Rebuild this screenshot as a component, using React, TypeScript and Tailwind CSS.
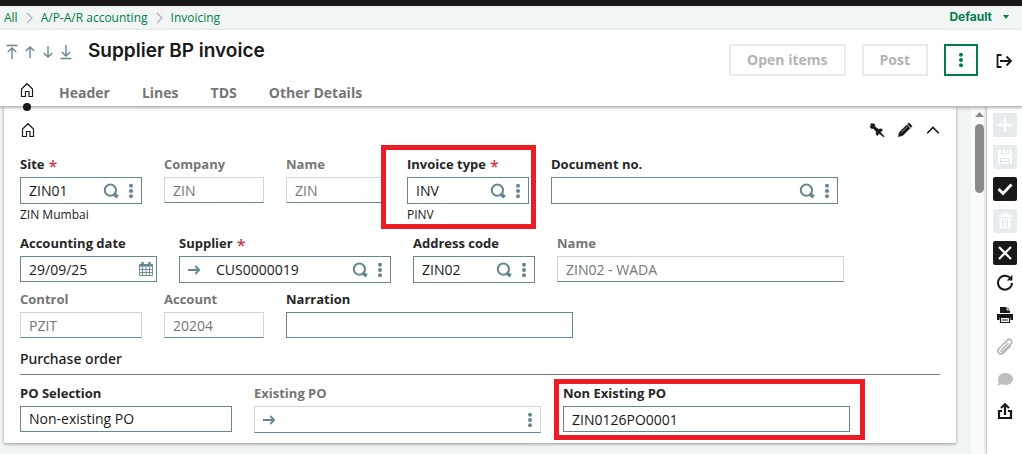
import { useId, type ReactNode } from 'react'
import clsx from 'clsx'

type IconProps = { children: ReactNode; size?: 16 | 24; className?: string }

const Icon = ({ children, size = 16, className }: IconProps) => (
  <svg
    width={size}
    height={size}
    viewBox={`0 0 ${size} ${size}`}
    fill="none"
    stroke="currentColor"
    aria-hidden="true"
    className={clsx('shrink-0', className)}
  >
    {children}
  </svg>
)

const HomeIcon = () => (
  <Icon className="text-[#191919]">
    <path d="M2.5 14.5V7L8 1.7L13.5 7v7.5h-3.5V9.5H6.5v5z" strokeWidth="1.2" />
  </Icon>
)

const SearchIcon = () => (
  <Icon>
    <circle cx="7.4" cy="7.2" r="5.6" strokeWidth="2" />
    <path d="M10.6 10.6L14.6 14.2" strokeWidth="3.6" />
  </Icon>
)

const DotsIcon = () => (
  <Icon>
    <g fill="currentColor" stroke="none">
      <circle cx="8" cy="2.8" r="2" />
      <circle cx="8" cy="8" r="2" />
      <circle cx="8" cy="13.2" r="2" />
    </g>
  </Icon>
)

const ArrowIcon = () => (
  <Icon>
    <path d="M2 8h11M9.3 4L13.2 8L9.3 12" strokeWidth="1.8" />
  </Icon>
)

const CalendarIcon = () => (
  <Icon>
    <path d="M1.5 3.5h13v11h-13zM1.5 8.5h13M1.5 11.5h13M4.5 6v8.5M8 6v8.5M11.5 6v8.5" strokeWidth="0.9" />
    <path d="M1.5 4.5h13" strokeWidth="2.4" />
    <path d="M4.5 1v3M11.5 1v3" strokeWidth="2.4" />
  </Icon>
)

const BreadcrumbArrow = () => (
  <svg width="7" height="12" viewBox="0 0 7 12" fill="none" stroke="#b3b8ba" strokeWidth="1.4" aria-hidden="true">
    <path d="M1 1L6 6L1 11" />
  </svg>
)

const Highlight = ({ className }: { className: string }) => (
  <div className={clsx('pointer-events-none absolute border-5 border-[#ed1c24]', className)} />
)

type FieldProps = {
  label: string
  width: string
  value?: string
  required?: boolean
  disabled?: boolean
  arrow?: boolean
  lookup?: boolean
  menu?: boolean
  calendar?: boolean
  options?: string[]
  hint?: string
  highlight?: string
}

const Field = ({
  label,
  width,
  value = '',
  required,
  disabled,
  arrow,
  lookup,
  menu,
  calendar,
  options,
  hint,
  highlight,
}: FieldProps) => {
  const id = useId()
  const control = clsx(
    'h-full min-w-0 flex-1 appearance-none bg-transparent pl-2 text-sm outline-none',
    disabled ? 'text-[#757575]' : 'text-[#191919]',
  )
  return (
    <div className={clsx('relative shrink-0', width)}>
      <label
        htmlFor={id}
        className={clsx(
          'flex h-[22px] gap-1 text-[13px] leading-[18px] font-bold whitespace-nowrap',
          disabled ? 'text-[#757575]' : 'text-[#262626]',
        )}
      >
        {label}
        {required && <span className="text-base leading-[22px] font-semibold text-[#cd384b]">*</span>}
      </label>
      <div
        className={clsx(
          'flex items-center border border-b-[#668592] bg-white text-[#668592]',
          menu ? 'h-[27px]' : 'h-[26px]',
          disabled ? 'border-x-[#ccd6db] border-t-[#ccd6db]' : 'border-x-[#668592] border-t-[#668592]',
        )}
      >
        {arrow && (
          <button type="button" aria-label={`Open ${label}`} className="mr-[6px] ml-[6px]">
            <ArrowIcon />
          </button>
        )}
        {options ? (
          <select id={id} defaultValue={value} className={control}>
            {options.map((option) => (
              <option key={option}>{option}</option>
            ))}
          </select>
        ) : (
          <input id={id} type="text" defaultValue={value} disabled={disabled} required={required} className={control} />
        )}
        {lookup && (
          <button type="button" aria-label={`Search ${label}`} className="mr-1">
            <SearchIcon />
          </button>
        )}
        {menu && (
          <button type="button" aria-label={`${label} actions`} className="mr-[2px]">
            <DotsIcon />
          </button>
        )}
        {calendar && (
          <button type="button" aria-label="Pick a date" className="mr-[2px]">
            <CalendarIcon />
          </button>
        )}
      </div>
      {hint && <p className="pt-[2px] pb-px text-xs leading-[18px] text-[#191919]">{hint}</p>}
      {highlight && <Highlight className={highlight} />}
    </div>
  )
}

const Row = ({ children, className }: { children: ReactNode; className?: string }) => (
  <div className={clsx('flex items-start gap-[22px]', className)}>{children}</div>
)

const recordButtons = [
  { label: 'First record', path: 'M2.5 1.5h11M8 15V4M3.8 8L8 4L12.2 8' },
  { label: 'Previous record', path: 'M8 14V3M3.8 7L8 3L12.2 7' },
  { label: 'Next record', path: 'M8 2v11M3.8 9L8 13L12.2 9' },
  { label: 'Last record', path: 'M2.5 14.5h11M8 1v11M3.8 8L8 12L12.2 8' },
]

const tabs = ['Header', 'Lines', 'TDS', 'Other Details']

const Header = () => (
  <header className="relative z-10 border-b border-[#b9bcbe] bg-white shadow-[0_1px_3px_rgba(0,0,0,0.3)]">
    <div className="flex items-start justify-between">
      <div className="flex h-[42px] items-center pl-1">
        {recordButtons.map(({ label, path }) => (
          <button key={label} type="button" aria-label={label} className="mr-[2px] pt-[2px] text-[#668592]">
            <Icon>
              <path d={path} strokeWidth="1.4" />
            </Icon>
          </button>
        ))}
        <h1 className="pl-3 font-[Inter,sans-serif] text-[19px] leading-6 font-semibold text-[#191919]">
          Supplier BP invoice
        </h1>
      </div>
      <div className="flex items-center gap-4 pt-[14px] pr-[10px] text-sm font-bold">
        <button type="button" disabled className="h-8 border-2 border-[#e6ebed] px-4 text-[#b3b3b3]">
          Open items
        </button>
        <button type="button" disabled className="h-8 border-2 border-[#e6ebed] px-4 text-[#b3b3b3]">
          Post
        </button>
        <button
          type="button"
          aria-label="More actions"
          className="flex h-8 w-[34px] items-center justify-center border-2 border-[#007e45] pb-px text-[#007e45]"
        >
          <DotsIcon />
        </button>
        <button type="button" aria-label="Exit" className="ml-[2px] pt-[2px] text-[#191919]">
          <Icon>
            <path d="M5.5 2H1.5v12h4M4 8h11M10.5 3.5L15 8l-4.5 4.500" strokeWidth="1.8" />
          </Icon>
        </button>
      </div>
    </div>
    <nav className="flex h-[30px] items-center gap-8 pt-1 pl-[19px] text-sm font-bold text-[#757575]">
      <button type="button" aria-label="Home" className="relative -mr-2 pb-[6px]">
        <HomeIcon />
        <span className="absolute top-[21px] left-1 size-2 rounded-full bg-[#191919]" />
      </button>
      {tabs.map((tab) => (
        <button key={tab} type="button">
          {tab}
        </button>
      ))}
    </nav>
  </header>
)

const CardTools = () => (
  <div className="flex h-[46px] items-center justify-between">
    <HomeIcon />
    <div className="-mr-px flex gap-3 text-[#191919]">
      <button type="button" aria-label="Pin">
        <Icon>
          <path
            d="M4 1.2L6 2.8L5.8 4.6L9.4 7.2L12.6 6.8L13.4 8.4L11.4 10.2L15.2 14.4L14.6 15L10.2 11.6L8.4 13.6L7 12.6L7.2 9.6L4.2 6.4L2.4 6.6L0.8 4.4L2.4 3.2L1.4 2.2L2.6 1.4L3.2 2.2z"
            fill="currentColor"
            strokeWidth="0.5"
          />
        </Icon>
      </button>
      <button type="button" aria-label="Edit">
        <Icon>
          <path
            d="M12 0.8L15.2 4L13.8 5.6L10.4 2.2zM9.7 2.9L13.1 6.3L5.8 13.6L1.2 14.8L2.4 10.2z"
            fill="currentColor"
            strokeWidth="0.4"
          />
          <path d="M4.500 10.500L10 5" stroke="#ffffff" strokeWidth="0.5" />
        </Icon>
      </button>
      <button type="button" aria-label="Collapse">
        <Icon>
          <path d="M2.2 11.2L8 5.4L13.8 11.2" strokeWidth="1.6" />
        </Icon>
      </button>
    </div>
  </div>
)

const InvoiceForm = () => (
  <form className="mr-[15px] ml-1 flex-1 self-start bg-white px-4 pb-[10px] shadow-[0_1px_3px_rgba(0,0,0,0.4)]">
    <CardTools />
    <Row className="mt-[2px]">
      <Field label="Site" value="ZIN01" required lookup menu hint="ZIN Mumbai" width="w-[122px]" />
      <Field label="Company" value="ZIN" disabled width="w-[100px]" />
      <Field label="Name" value="ZIN" disabled width="w-[99px]" />
      <Field
        label="Invoice type"
        value="INV"
        required
        lookup
        menu
        hint="PINV"
        width="w-[122px]"
        highlight="-top-[10px] -right-[7px] -bottom-1 -left-[26px]"
      />
      <Field label="Document no." lookup menu width="w-[287px]" />
    </Row>
    <Row className="mt-[9px]">
      <Field label="Accounting date" value="29/09/25" calendar width="w-[137px]" />
      <Field label="Supplier" value="CUS0000019" required arrow lookup menu width="w-[212px]" />
      <Field label="Address code" value="ZIN02" lookup menu width="w-[122px]" />
      <Field label="Name" value="ZIN02 - WADA" disabled width="w-[287px]" />
    </Row>
    <Row className="mt-[7px]">
      <Field label="Control" value="PZIT" disabled width="w-[122px]" />
      <Field label="Account" value="20204" disabled width="w-[100px]" />
      <Field label="Narration" width="w-[287px]" />
    </Row>
    <h2 className="mt-[9px] mb-[9px] border-b border-[#757575] pb-[3px] font-['Noto_Sans',sans-serif] text-sm leading-6 font-medium text-[#191919]">
      Purchase order
    </h2>
    <Row>
      <Field
        label="PO Selection"
        value="Non-existing PO"
        options={['Non-existing PO', 'Existing PO']}
        width="w-[212px]"
      />
      <Field label="Existing PO" disabled arrow menu width="w-[287px]" />
      <Field
        label="Non Existing PO"
        value="ZIN0126PO0001"
        width="w-[287px]"
        highlight="-top-[5px] -right-[15px] -bottom-2 -left-[9px]"
      />
    </Row>
  </form>
)

type Action = { label: string; tone: string; art: ReactNode }

const editActions: Action[] = [
  {
    label: 'New',
    tone: 'bg-[#e6ebed] text-white',
    art: <path d="M12 5v14M5 12h14" strokeWidth="2.4" />,
  },
  {
    label: 'Save',
    tone: 'bg-[#e6ebed] text-white',
    art: (
      <>
        <path d="M5 5h12l2 2v12H5z" fill="currentColor" stroke="none" />
        <path d="M8.5 5v4h7V5M7.5 19v-5.5h9V19M7.5 16.5h9" stroke="#dde3e6" strokeWidth="1" />
        <path d="M13.5 5.5v2" stroke="#dde3e6" strokeWidth="1.4" />
      </>
    ),
  },
  {
    label: 'Create',
    tone: 'bg-[#191919] text-white',
    art: <path d="M5.5 12L10 16.5L18.5 7.5" strokeWidth="2.8" />,
  },
  {
    label: 'Delete',
    tone: 'bg-[#e6ebed] text-white',
    art: (
      <>
        <path d="M5 7h14M9.5 6V4.8h5V6" strokeWidth="1.8" />
        <path d="M6.5 9h11v10.5h-11z" fill="currentColor" stroke="none" />
        <path d="M9.5 10.5V18M12 10.5V18M14.5 10.5V18" stroke="#dde3e6" strokeWidth="1" />
      </>
    ),
  },
  {
    label: 'Cancel',
    tone: 'bg-[#191919] text-white',
    art: <path d="M6 6l12 12M18 6L6 18" strokeWidth="2.2" />,
  },
]

const pageActions: Action[] = [
  {
    label: 'Refresh',
    tone: 'text-[#191919]',
    art: (
      <>
        <path d="M17.4 7.2A7 7 0 1 0 19 12" strokeWidth="2" />
        <path d="M19.4 3.8v5.6h-5.6z" fill="currentColor" stroke="none" />
      </>
    ),
  },
  {
    label: 'Print',
    tone: 'text-[#191919]',
    art: (
      <>
        <path d="M7 4h7l3 3v3H7zM4 11h16v6h-2.5v-2.5h-11V17H4z" fill="currentColor" stroke="none" />
        <path d="M14 4v3h3" stroke="#ffffff" strokeWidth="1" />
        <path d="M7.5 14.5h9v5h-9zM9 17h6" strokeWidth="1.2" />
      </>
    ),
  },
  {
    label: 'Attachments',
    tone: 'text-[#b8b8b8]',
    art: (
      <path
        d="M15.5 8L8.5 15c-1.1 1.1 0.5 2.7 1.6 1.6L18 8.8c2.5-2.7-1-6.100-3.600-3.500L6 13.500c-3.100 3.200 1.200 7.400 4.400 4.400L18 10.500"
        strokeWidth="1.7"
      />
    ),
  },
  {
    label: 'Comments',
    tone: 'text-[#bfbfbf]',
    art: (
      <path
        d="M12.5 6c4.2 0 7.5 2.6 7.5 6s-3.300 6-7.500 6c-1.500 0-2.800-.3-4-.8C7.300 18 5.700 18.300 4 18.200c1-.8 1.500-1.600 1.700-2.600C4.900 14.500 5 13.400 5 12c0-3.400 3.300-6 7.500-6z"
        fill="currentColor"
        stroke="none"
      />
    ),
  },
  {
    label: 'Share',
    tone: 'text-[#191919]',
    art: <path d="M9 12H6v7h12v-7h-3M12 16V5.500M8 9l4-3.800L16 9" strokeWidth="2.200" />,
  },
]

const ActionGroup = ({ actions }: { actions: Action[] }) => (
  <div className="flex flex-col gap-2">
    {actions.map(({ label, tone, art }) => (
      <button key={label} type="button" aria-label={label} className={clsx('size-6 rounded-xs', tone)}>
        <Icon size={24}>{art}</Icon>
      </button>
    ))}
  </div>
)

const ActionBar = () => (
  <aside className="flex w-9 shrink-0 flex-col gap-[6px] border-l border-[#d0d4d6] bg-white pt-[6px] pl-[6px] shadow-[-1px_0_2px_rgba(0,0,0,0.15)]">
    <ActionGroup actions={editActions} />
    <ActionGroup actions={pageActions} />
  </aside>
)

const ScrollTrack = () => (
  <div className="flex w-[15px] shrink-0 flex-col items-center bg-[#fafafa] pt-[5px] pl-px">
    <svg width="9" height="5" viewBox="0 0 9 5" fill="#8b8b8b" aria-hidden="true">
      <path d="M0 5L4.5 0L9 5z" />
    </svg>
    <div className="mt-[7px] h-[69px] w-[9px] rounded-full bg-[#8b8b8b]" />
  </div>
)

export default function App() {
  return (
    <div className="flex min-h-screen flex-col bg-white font-['Open_Sans','Noto_Sans',sans-serif]">
      <div className="h-[6px] bg-[#191919]" />
      <div className="flex h-6 items-center justify-between bg-[#f2f5f6] pr-3 pl-1 text-[#007e45]">
        <nav aria-label="Breadcrumb" className="flex items-center gap-2 text-xs">
          <a href="#all">All</a>
          <BreadcrumbArrow />
          <a href="#accounting">A/P-A/R accounting</a>
          <BreadcrumbArrow />
          <a href="#invoicing">Invoicing</a>
        </nav>
        <button type="button" className="flex items-center gap-[10px] pb-[2px] font-[Inter,sans-serif] text-xs font-bold">
          Default
          <svg width="8" height="4" viewBox="0 0 8 4" fill="currentColor" aria-hidden="true">
            <path d="M1 0h6L4 4z" />
          </svg>
        </button>
      </div>
      <Header />
      <main className="flex flex-1 bg-[#f0f4f5]">
        <InvoiceForm />
        <ScrollTrack />
        <ActionBar />
      </main>
    </div>
  )
}
